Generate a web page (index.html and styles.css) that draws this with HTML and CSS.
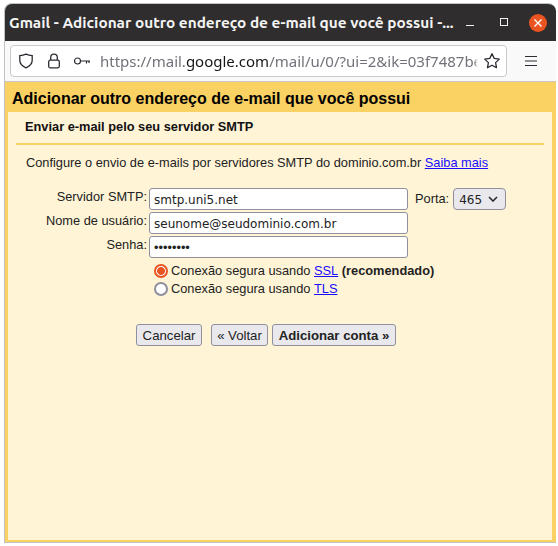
FILE: index.html
```html
<!DOCTYPE html>
<html lang="pt-BR">
<head>
<meta charset="utf-8">
<title>Gmail</title>
<link rel="stylesheet" href="styles.css">
</head>
<body>
<div class="window">
  <header class="titlebar">
    <div class="title">Gmail - Adicionar outro endereço de e-mail que você possui -...</div>
    <div class="win-controls">
      <svg class="wc-min" width="12" height="12" viewBox="0 0 12 12"><path d="M2 8.500h8" stroke="#f2f2f2" stroke-width="1"/></svg>
      <svg class="wc-max" width="12" height="12" viewBox="0 0 12 12"><rect x="2.500" y="1.500" width="7" height="7" fill="none" stroke="#f2f2f2" stroke-width="1"/></svg>
      <span class="wc-close"><svg width="18" height="18" viewBox="0 0 18 18"><path d="M5.500 5.500l7 7M12.500 5.500l-7 7" stroke="#fff" stroke-width="1.400"/></svg></span>
    </div>
  </header>
  <div class="toolbar">
    <div class="urlbar">
      <svg class="ic ic-shield" width="16" height="16" viewBox="0 0 16 16"><path d="M8 1.200c2 .9 4 1.300 6.200 1.400v4.600c0 3.600-2.600 6-6.200 7.600-3.600-1.600-6.200-4-6.200-7.600V2.600c2.200-.1 4.200-.5 6.200-1.400z" fill="none" stroke="#2b2b33" stroke-width="1.300"/></svg>
      <svg class="ic ic-lock" width="16" height="16" viewBox="0 0 16 16"><path d="M4.700 7V4.500a3.300 3.300 0 0 1 6.600 0V7" fill="none" stroke="#2b2b33" stroke-width="1.300"/><rect x="2.700" y="7.200" width="10.600" height="7.600" rx="1.500" fill="none" stroke="#2b2b33" stroke-width="1.300"/></svg>
      <svg class="ic ic-key" width="18" height="16" viewBox="0 0 18 16"><circle cx="4.500" cy="8" r="3" fill="none" stroke="#2b2b33" stroke-width="1.200"/><path d="M7.500 8H17M13.500 8v2.500M16 8v2" fill="none" stroke="#2b2b33" stroke-width="1.200"/></svg>
      <div class="url"><span class="dim">https://mail.</span>google.com<span class="dim">/mail/u/0/?ui=2&amp;ik=03f7487be</span></div>
      <svg class="ic ic-star" width="18" height="18" viewBox="0 0 18 18"><path d="M9 1.700l2.200 4.700 5.100.7-3.700 3.500.9 5.100L9 13.200l-4.500 2.500.9-5.100L1.700 7.100l5.100-.7z" fill="none" stroke="#2b2b33" stroke-width="1.300" stroke-linejoin="round"/></svg>
    </div>
    <svg class="menu" width="14" height="12" viewBox="0 0 14 12"><path d="M1 1.500h12M1 6h12M1 10.500h12" stroke="#2b2b33" stroke-width="1.200"/></svg>
  </div>
  <main class="page">
    <h1 class="page-title">Adicionar outro endereço de e-mail que você possui</h1>
    <div class="panel">
      <h2 class="section-title">Enviar e-mail pelo seu servidor SMTP</h2>
      <p class="intro">Configure o envio de e-mails por servidores SMTP do dominio.com.br <a href="#">Saiba mais</a></p>
      <form class="form">
        <div class="row">
          <label class="lbl">Servidor SMTP:</label>
          <input class="field" type="text" value="smtp.uni5.net">
          <label class="port-lbl">Porta:</label>
          <select class="port"><option>465</option></select>
        </div>
        <div class="row">
          <label class="lbl">Nome de usuário:</label>
          <input class="field" type="text" value="seunome@seudominio.com.br">
        </div>
        <div class="row">
          <label class="lbl">Senha:</label>
          <input class="field field-pass" type="password" value="12345678">
        </div>
        <div class="radios">
          <label class="radio"><input type="radio" name="s" checked>Conexão segura usando&nbsp;<a href="#">SSL</a>&nbsp;<b>(recomendado)</b></label>
          <label class="radio"><input type="radio" name="s">Conexão segura usando&nbsp;<a href="#">TLS</a></label>
        </div>
        <div class="actions">
          <button type="button" class="btn btn-cancel">Cancelar</button>
          <button type="button" class="btn btn-back">« Voltar</button>
          <button type="button" class="btn btn-primary">Adicionar conta »</button>
        </div>
      </form>
    </div>
  </main>
</div>
</body>
</html>
```
FILE: styles.css
```css
* { box-sizing: border-box; }
html, body { margin: 0; height: 100%; background: #fff; }
body { padding: 3px 2px 3px 4px; font-family: "Liberation Sans", Arial, sans-serif; overflow: hidden; }
.window { height: 540px; display: flex; flex-direction: column; background: #c8c8c8; border-radius: 8px 8px 0 0; border: 1px solid #c2c2c2; border-right: 0; overflow: hidden; }
.titlebar { flex: none; height: 37px; background: #2f2d2d; display: flex; align-items: center; padding-left: 4px; }
.title { font: bold 15.36px "Ubuntu", "DejaVu Sans", sans-serif; color: #f4f4f4; white-space: nowrap; width: 450px; overflow: hidden; }
.win-controls { display: flex; align-items: center; margin-left: auto; }
.wc-min { margin-right: 22px; }
.wc-max { margin-right: 19px; }
.wc-close { width: 18px; height: 18px; border-radius: 50%; background: #e95420; display: block; margin-right: 9px; }
.wc-close svg { display: block; }
.toolbar { flex: none; height: 41px; background: #f9f9fa; border-bottom: 1px solid #c8c8c8; display: flex; align-items: center; padding: 0 6px 0 5px; }
.urlbar { width: 497px; height: 32px; background: #fff; border: 1px solid #c9c9c9; border-radius: 4px; display: flex; align-items: center; padding-left: 7px; }
.ic { flex: none; display: block; }
.ic-shield { margin-right: 12px; }
.ic-lock { margin-right: 11px; }
.ic-key { margin-right: 9px; }
.url { width: 378px; font: 15px "Noto Sans", sans-serif; color: #17171a; white-space: nowrap; overflow: hidden; flex: none; -webkit-mask-image: linear-gradient(to right, #000 99%, transparent); mask-image: linear-gradient(to right, #000 99%, transparent); }
.dim { color: #72727a; }
.ic-star { margin-left: 5px; }
.menu { flex: none; margin-left: 17px; }
.page { flex: 1; min-height: 0; background: #fad163; padding: 0 4px 2px 3px; display: flex; flex-direction: column; }
.page-title { margin: 0; height: 30px; flex: none; line-height: 34px; padding-left: 4px; font-size: 16px; font-weight: bold; color: #000; white-space: nowrap; }
.panel { flex: 1; background: #fff4d6; padding: 0 8px; font-size: 12.8px; color: #222; }
.section-title { margin: 0; height: 33px; line-height: 30px; padding-left: 9px; font-size: 12.8px; font-weight: bold; color: #111; border-bottom: 2px solid #fad163; }
.intro { margin: 10px 0 0 10px; line-height: 15px; white-space: nowrap; }
a { color: #1a0dff; text-decoration: underline; }
.form { margin-top: 18px; }
.row { display: flex; height: 24px; }
.lbl { width: 133px; flex: none; text-align: right; margin-right: 2px; line-height: 15px; padding-top: 1px; margin-left: -2px; }
.field { width: 259px; height: 22px; flex: none; padding: 1px 4px 0; border: 1px solid #8f8f9d; border-radius: 3px; background: #fff; color: #222; font: 12px "DejaVu Sans", sans-serif; outline: 0; }
.field-pass { font: 12.8px "Liberation Sans", sans-serif; }
.port-lbl { margin-left: 7px; line-height: 22px; }
.port { margin-left: 4px; width: 53px; height: 22px; border: 1px solid #8f8f9d; border-radius: 4px; color: #222; font: 12px "DejaVu Sans", sans-serif; padding: 1px 0 0 5px; -webkit-appearance: none; appearance: none; background: #e9e9ed url("data:image/svg+xml,%3Csvg xmlns='http://www.w3.org/2000/svg' width='10' height='6' viewBox='0 0 10 6'%3E%3Cpath d='M1 1l4 4 4-4' fill='none' stroke='%23222' stroke-width='1.500'/%3E%3C/svg%3E") no-repeat right 7px center; }
.radios { margin: 2px 0 0 138px; }
.radio { display: flex; align-items: center; height: 18px; line-height: 18px; white-space: nowrap; }
.radio input { -webkit-appearance: none; appearance: none; flex: none; margin: 0 3px 0 0; width: 14px; height: 14px; border: 2px solid #8f8f9d; border-radius: 50%; background: #fff; }
.radio input:checked { border-color: #e95420; background: radial-gradient(circle, #e95420 0 3.600px, #fff 4.200px); }
.actions { margin: 26px 0 0 120px; display: flex; }
.btn { height: 22px; padding: 0; border: 1px solid #8f8f9d; border-radius: 3px; background: #e9e9ed; color: #222; font: 13.2px "Liberation Sans", sans-serif; }
.btn-cancel { width: 66px; margin-right: 9px; }
.btn-back { width: 57px; }
.btn-primary { width: 124px; margin-left: 4px; font-weight: bold; }
```
